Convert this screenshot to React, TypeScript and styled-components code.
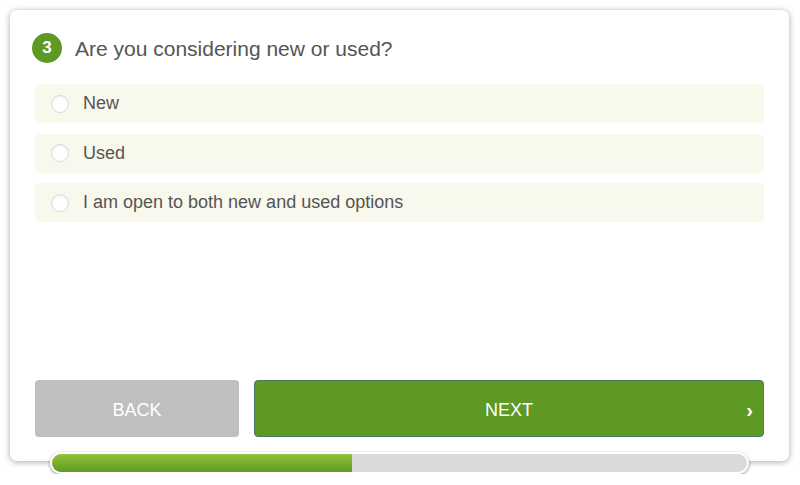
import * as React from 'react';
import styled, { createGlobalStyle } from 'styled-components';

const GlobalStyle = createGlobalStyle`
  html, body {
    margin: 0;
    padding: 0;
    background: #ffffff;
    font-family: 'Liberation Sans', Arial, sans-serif;
  }
`;

const Page = styled.div`
  padding: 10px 11px 0 10px;
  width: 800px;
  box-sizing: border-box;
`;

const Card = styled.div`
  height: 451px;
  box-sizing: border-box;
  background: #fff;
  border-radius: 7px;
  box-shadow: 0 1px 6px rgba(0, 0, 0, 0.35);
  padding: 23px 25px 24px;
  display: flex;
  flex-direction: column;
`;

const TitleRow = styled.div`
  display: flex;
  align-items: center;
  gap: 13px;
  margin-left: -3px;
  margin-bottom: 21px;
`;

const Badge = styled.div`
  width: 30px;
  height: 30px;
  border-radius: 50%;
  background: #5e9923;
  color: #fff;
  font-size: 17px;
  font-weight: bold;
  display: flex;
  align-items: center;
  justify-content: center;
`;

const Title = styled.h2`
  margin: 2px 0 0;
  font-size: 21px;
  font-weight: normal;
  color: #555;
`;

const Options = styled.div`
  display: flex;
  flex-direction: column;
  gap: 10.5px;
`;

const Option = styled.label`
  height: 39px;
  border-radius: 5px;
  background: #f9f8ec;
  display: flex;
  align-items: center;
  padding-left: 16px;
  gap: 14px;
  font-size: 18px;
  color: #555;
  cursor: pointer;
`;

const Radio = styled.span<{ $checked: boolean }>`
  width: 18px;
  height: 18px;
  box-sizing: border-box;
  border-radius: 50%;
  border: 1px solid #dcdcd6;
  background: ${p => (p.$checked ? '#5e9923' : '#fff')};
  box-shadow: inset 0 1px 2px rgba(0, 0, 0, 0.08);
`;

const Buttons = styled.div`
  margin-top: auto;
  display: flex;
  gap: 15px;
`;

const Button = styled.button<{ $primary?: boolean }>`
  height: 57px;
  border-radius: 4px;
  border: ${p => (p.$primary ? '1px solid #4d7767' : 'none')};
  background: ${p => (p.$primary ? '#5e9923' : '#bfbfbf')};
  color: #fff;
  font-family: 'Liberation Sans', Arial, sans-serif;
  font-size: 18px;
  text-transform: uppercase;
  position: relative;
  cursor: pointer;
  width: ${p => (p.$primary ? 'auto' : '204px')};
  flex: ${p => (p.$primary ? '1' : 'none')};
  padding: 3px 0 0;
`;

const Chevron = styled.span`
  position: absolute;
  right: 10px;
  top: 50%;
  transform: translateY(-45%);
  font-size: 20px;
  font-weight: bold;
`;

const Progress = styled.div`
  margin: -9px 0 0 40px;
  width: 699px;
  height: 22px;
  box-sizing: border-box;
  border: 2px solid #fff;
  border-radius: 11px;
  background: #dadada;
  box-shadow: 0 1px 3px rgba(0, 0, 0, 0.45);
  overflow: hidden;
  position: relative;
`;

const Fill = styled.div`
  height: 100%;
  background: linear-gradient(to bottom, #93c23c, #5f9a22);
`;

const options = ['New', 'Used', 'I am open to both new and used options'];

export default function App() {
  const [selected, setSelected] = React.useState<string | null>(null);
  const progress = 43.2;
  return (
    <Page>
      <GlobalStyle />
      <Card>
        <TitleRow>
          <Badge>3</Badge>
          <Title>Are you considering new or used?</Title>
        </TitleRow>
        <Options>
          {options.map(o => (
            <Option key={o} onClick={() => setSelected(o)}>
              <Radio $checked={selected === o} />
              {o}
            </Option>
          ))}
        </Options>
        <Buttons>
          <Button>Back</Button>
          <Button $primary>
            Next
            <Chevron>›</Chevron>
          </Button>
        </Buttons>
      </Card>
      <Progress>
        <Fill style={{ width: `${progress}%` }} />
      </Progress>
    </Page>
  );
}
